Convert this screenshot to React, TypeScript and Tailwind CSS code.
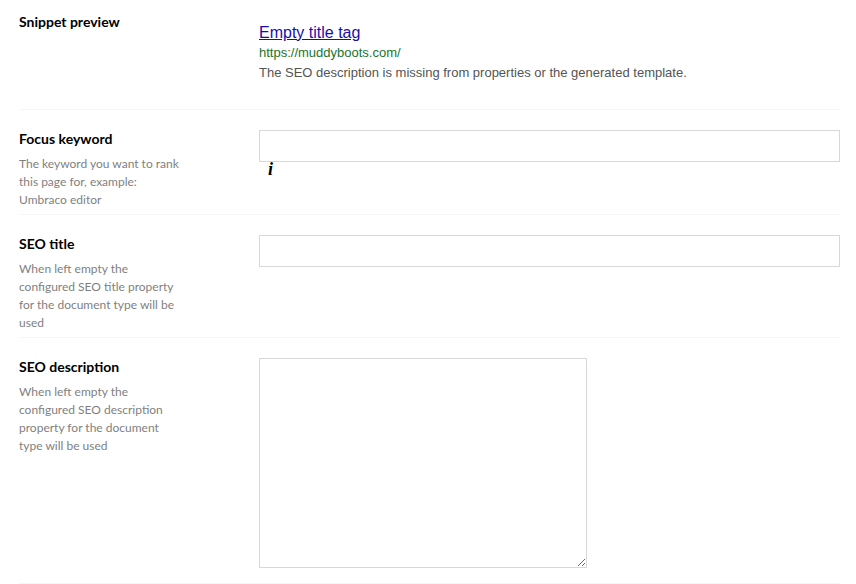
export default function App() {
  const label = "text-[14px] leading-[18px] font-bold text-black";
  const desc = "mt-[7px] text-[12px] leading-[18px] text-[#7f7f7f]";
  return (
    <div className="w-[856px] h-[584px] overflow-hidden bg-white pl-[19px] pr-[16px] font-['Lato',sans-serif]">
      <div className="flex h-[110px] border-b border-[#f6f6f6]">
        <div className="w-[240px] pt-[13px]">
          <div className={label}>Snippet preview</div>
        </div>
        <div className="flex-1 pt-[23px] font-['Liberation_Sans',sans-serif]">
          <a href="#" className="block text-[16px] leading-[20px] text-[#1a0dab] underline">Empty title tag</a>
          <div className="mt-[1px] text-[13px] leading-[18px] text-[#1a7430]">https://muddyboots.com/</div>
          <div className="mt-[2px] text-[13px] leading-[18px] text-[#545454]">The SEO description is missing from properties or the generated template.</div>
        </div>
      </div>
      <div className="flex h-[105px] border-b border-[#f6f6f6]">
        <div className="w-[240px] pt-[20px]">
          <div className={label}>Focus keyword</div>
          <div className={`${desc} w-[165px]`}>The keyword you want to rank this page for, example: Umbraco editor</div>
        </div>
        <div className="flex-1 pt-[20px]">
          <input className="block w-full h-[32px] border border-[#d8d7d9] bg-white outline-none" />
          <div className="pl-[9px] font-['Liberation_Serif',serif] text-[18px] leading-[14px] font-bold italic text-black">i</div>
        </div>
      </div>
      <div className="flex h-[123px] border-b border-[#f6f6f6]">
        <div className="w-[240px] pt-[20px]">
          <div className={label}>SEO title</div>
          <div className={`${desc} w-[160px]`}>When left empty the configured SEO title property for the document type will be used</div>
        </div>
        <div className="flex-1 pt-[20px]">
          <input className="block w-full h-[32px] border border-[#d8d7d9] bg-white outline-none" />
        </div>
      </div>
      <div className="flex h-[246px] border-b border-[#f6f6f6]">
        <div className="w-[240px] pt-[20px]">
          <div className={label}>SEO description</div>
          <div className={`${desc} w-[150px]`}>When left empty the configured SEO description property for the document type will be used</div>
        </div>
        <div className="flex-1 pt-[20px]">
          <textarea className="block w-[328px] h-[210px] border border-[#d8d7d9] bg-white outline-none" />
        </div>
      </div>
    </div>
  );
}
